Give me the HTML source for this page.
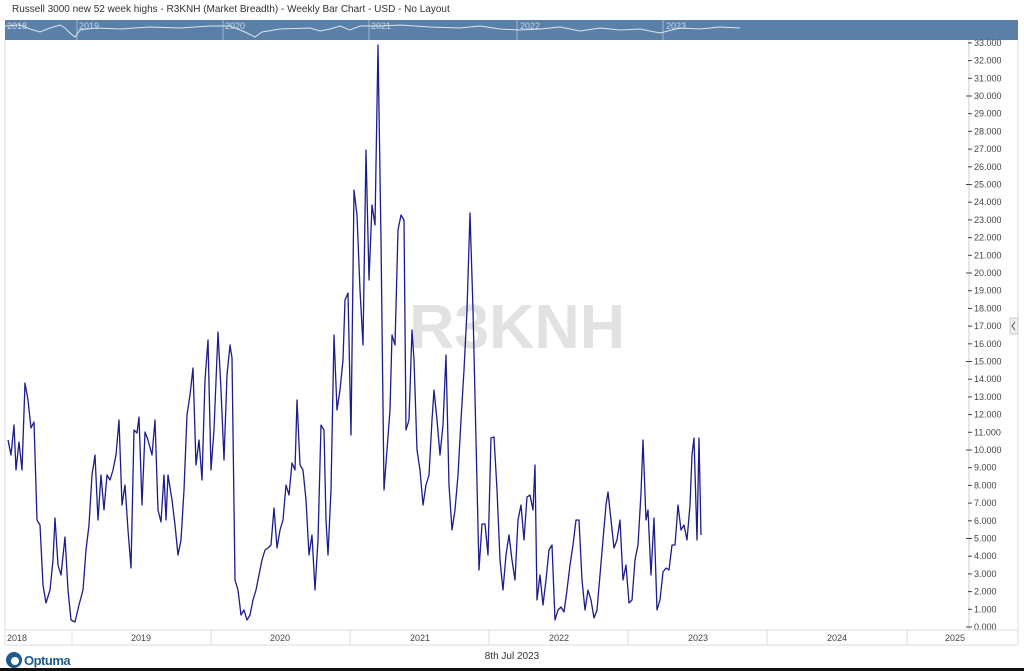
<!DOCTYPE html>
<html><head><meta charset="utf-8"><style>
body{margin:0;width:1024px;height:671px;background:#fff;overflow:hidden;position:relative;font-family:"Liberation Sans",sans-serif}
.t{position:absolute;left:12px;top:4px;font-size:10px;color:#333}
</style></head><body>
<div class="t">Russell 3000 new 52 week highs - R3KNH (Market Breadth) - Weekly Bar Chart - USD - No Layout</div>
<svg width="1024" height="671" style="position:absolute;left:0;top:0" font-family="Liberation Sans, sans-serif">
<rect x="5" y="20" width="1013" height="20" fill="#5b80a8"/>
<g stroke="#9fb6cf" stroke-width="1"><line x1="77" y1="20" x2="77" y2="40"/><line x1="223" y1="20" x2="223" y2="40"/><line x1="369" y1="20" x2="369" y2="40"/><line x1="517" y1="20" x2="517" y2="40"/><line x1="663" y1="20" x2="663" y2="40"/></g>
<g font-size="9" fill="#c9d6e6"><text x="7" y="29">2018</text><text x="79" y="29">2019</text><text x="225" y="29">2020</text><text x="371" y="29">2021</text><text x="520" y="29">2022</text><text x="666" y="29">2023</text></g>
<polyline fill="none" stroke="#dde6f0" stroke-width="1" points="5,26 20,25 30,29 40,32 50,28 60,25 65,28 70,33 75,37 80,30 95,28 120,29 150,27 180,28 210,26 230,26 245,32 255,37 262,32 280,29 310,28 320,31 330,29 340,26 350,30 360,26 380,26 400,25 430,27 460,28 480,26 500,29 520,30 540,29 560,27 580,31 600,28 620,30 640,29 660,33 680,28 700,29 720,27 740,28"/>
<line x1="5" y1="40" x2="5" y2="645" stroke="#ddd"/>
<line x1="969" y1="40" x2="969" y2="630" stroke="#ccc"/>
<line x1="1018" y1="40" x2="1018" y2="645" stroke="#ddd"/>
<rect x="1010" y="318" width="8" height="16" fill="#eee" stroke="#ccc"/>
<path d="M1015,322 L1012,326 L1015,330" fill="none" stroke="#555"/>
<text x="409" y="348" font-size="62" font-weight="bold" fill="#e2e2e2" textLength="216" lengthAdjust="spacingAndGlyphs">R3KNH</text>
<g id="ax" font-size="9" fill="#444"></g>
<line x1="5" y1="630" x2="1018" y2="630" stroke="#ddd"/>
<line x1="5" y1="645" x2="1018" y2="645" stroke="#ddd"/>
<g stroke="#ddd"><line x1="72" y1="630" x2="72" y2="645"/><line x1="211" y1="630" x2="211" y2="645"/><line x1="350" y1="630" x2="350" y2="645"/><line x1="489" y1="630" x2="489" y2="645"/><line x1="628" y1="630" x2="628" y2="645"/><line x1="767" y1="630" x2="767" y2="645"/><line x1="907" y1="630" x2="907" y2="645"/></g>
<g font-size="9" fill="#444" text-anchor="middle"><text x="17" y="641">2018</text><text x="141" y="641">2019</text><text x="280" y="641">2020</text><text x="420" y="641">2021</text><text x="559" y="641">2022</text><text x="698" y="641">2023</text><text x="837" y="641">2024</text><text x="955" y="641">2025</text></g>
<text x="512" y="659" font-size="10" fill="#333" text-anchor="middle">8th Jul 2023</text>
<circle cx="14" cy="660" r="8" fill="#1e5a8e"/><circle cx="15" cy="661" r="4" fill="#fff"/>
<text x="24" y="665" font-size="13" fill="#1e5a8e" font-weight="bold" letter-spacing="-0.5">Optuma</text>
<rect x="0" y="668" width="1024" height="3" fill="#111"/>
<polyline fill="none" stroke="#1c1c8c" stroke-width="1.3" stroke-linejoin="round" points="8,440 11,455 14,425 16,470 19,442 22,470 25,383 28,400 31,428 34,422 37,520 40,525 43,585 46,603 50,590 53,560 55,518 58,565 61,575 65,537 68,590 71,620 75,622 79,605 83,590 86,550 89,525 92,475 95,455 98,520 101,475 104,510 107,475 110,480 113,470 116,455 119,420 122,505 125,485 128,530 131,568 134,430 137,433 139,417 142,505 145,432 148,440 152,455 155,420 158,510 161,522 164,475 166,520 168,475 172,500 175,525 178,555 181,540 184,490 187,415 190,395 193,368 196,465 199,440 202,480 205,380 208,340 211,470 214,430 218,332 221,390 224,460 227,375 230,345 232,358 235,580 238,590 241,615 244,610 247,620 250,615 253,600 256,590 259,575 262,560 265,550 268,548 271,545 274,508 277,548 280,530 283,520 286,485 289,495 292,463 295,470 297,400 300,465 303,470 306,500 309,555 312,535 315,590 318,540 321,425 324,430 326,520 328,555 331,490 334,335 337,410 340,390 343,360 345,300 348,293 351,435 354,190 357,215 360,290 363,345 366,150 369,280 372,205 375,225 378,45 381,240 384,490 387,450 390,410 392,335 395,345 398,230 401,215 404,220 406,430 409,420 412,330 414,360 417,450 420,470 423,505 426,485 429,475 432,420 434,390 437,420 440,455 443,425 446,355 449,485 452,530 455,510 458,475 461,420 464,370 467,310 470,213 473,310 476,440 479,570 482,524 485,524 488,555 491,438 494,437 497,490 500,560 503,590 506,555 509,535 512,560 515,580 518,520 521,505 524,540 527,497 530,495 533,510 535,465 537,600 540,575 543,605 546,580 549,550 552,545 555,620 558,610 561,607 564,612 567,590 570,565 573,545 576,520 579,520 582,580 585,610 588,590 591,600 594,618 597,610 600,575 603,540 606,505 608,492 611,520 614,548 617,540 620,520 623,580 626,565 629,603 632,600 635,560 638,545 641,493 643,440 646,520 648,510 651,575 654,518 657,610 660,600 663,572 666,568 669,570 672,545 675,545 678,505 681,530 684,525 687,540 690,505 692,455 694,438 697,540 699,438 701,535"/>
</svg>
<script>
var g=document.getElementById('ax'),s='';
for(var v=0;v<=33;v++){var y=627-17.7*v;var big=v%5==0;s+='<line x1="'+(big?966:968)+'" y1="'+y+'" x2="972" y2="'+y+'" stroke="#444"/><text x="974" y="'+(y+3)+'">'+v+'.000</text>';}
g.innerHTML=s;
</script>
</body></html>
